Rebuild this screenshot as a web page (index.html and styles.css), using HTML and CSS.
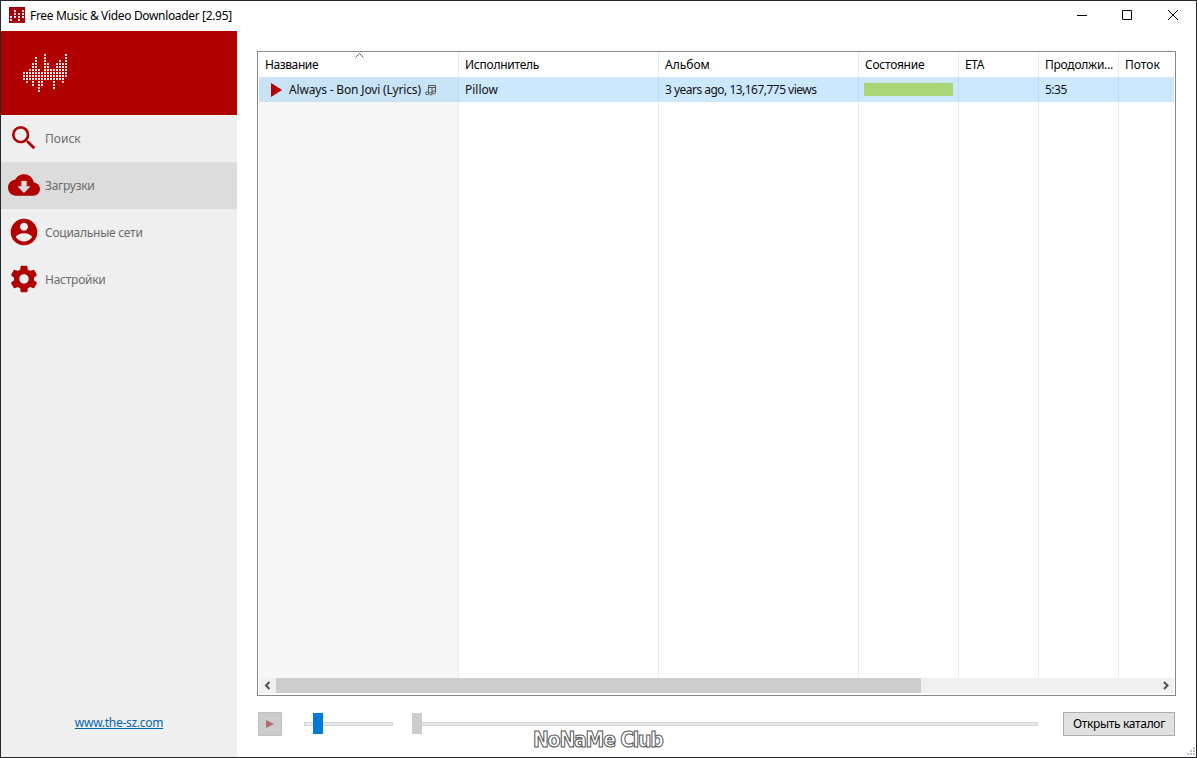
FILE: index.html
```html
<!DOCTYPE html>
<html lang="ru">
<head>
    <meta charset="UTF-8">
    <meta name="viewport" content="width=device-width, initial-scale=1.0">
    <title>Free Music &amp; Video Downloader</title>
    <link rel="stylesheet" href="styles.css">
</head>
<body>
    <div class="window">
        <header class="titlebar">
            <svg class="app-icon" width="16" height="16" viewBox="0 0 16 16">
                <rect width="16" height="16" fill="#a3000a"/>
                <g stroke="#f3dede" stroke-width="2" stroke-dasharray="2 1">
                    <path d="M2 9v5M6 3v8M10 6v8M14 3v8"/>
                </g>
            </svg>
            <span class="title">Free Music &amp; Video Downloader [2.95]</span>
            <div class="window-buttons">
                <svg width="46" height="28" viewBox="0 0 46 28"><path d="M18 14.500h10"/></svg>
                <svg width="45" height="28" viewBox="0 0 45 28"><path d="M17.500 9.500h9v9h-9z"/></svg>
                <svg width="46" height="28" viewBox="0 0 46 28"><path d="M18 9l10 10M28 9L18 19"/></svg>
            </div>
        </header>

        <div class="content">
            <aside class="sidebar">
                <div class="banner">
                    <svg width="45" height="39" viewBox="0 0 45 39">
                        <g stroke="#f7e4e4" stroke-width="2" stroke-dasharray="2 1">
                            <path d="M1 18v9M4 18v12M7 15v12M10 9v24M13 3v24M16 15v24M19 18v15M22 0v27M25 9v18M28 15v12M31 15v21M34 9v18M37 6v21M40 9v21M43 0v24"/>
                        </g>
                    </svg>
                </div>
                <nav>
                    <a class="nav-item">
                        <svg width="32" height="32" viewBox="0 0 24 24"><path d="M15.500 14h-.79l-.28-.27A6.470 6.470 0 0 0 16 9.500 6.500 6.500 0 1 0 9.500 16c1.610 0 3.090-.59 4.230-1.570l.27.28v.79l5 4.990L20.490 19l-4.990-5zm-6 0C7.010 14 5 11.990 5 9.500S7.010 5 9.500 5 14 7.010 14 9.500 11.990 14 9.500 14z"/></svg>
                        <span>Поиск</span>
                    </a>
                    <a class="nav-item active">
                        <svg width="32" height="32" viewBox="0 0 24 24"><path d="M19.350 10.040C18.670 6.590 15.640 4 12 4 9.110 4 6.600 5.640 5.350 8.040 2.340 8.360 0 10.910 0 14c0 3.310 2.690 6 6 6h13c2.760 0 5-2.240 5-5 0-2.640-2.050-4.780-4.650-4.960zM17 13l-5 5-5-5h3V9h4v4h3z"/></svg>
                        <span class="tight">Загрузки</span>
                    </a>
                    <a class="nav-item">
                        <svg width="32" height="32" viewBox="0 0 24 24"><path d="M12 2C6.480 2 2 6.480 2 12s4.480 10 10 10 10-4.480 10-10S17.520 2 12 2zm0 3c1.660 0 3 1.340 3 3s-1.340 3-3 3-3-1.340-3-3 1.340-3 3-3zm0 14.200c-2.500 0-4.710-1.280-6-3.220.03-1.990 4-3.080 6-3.080 1.990 0 5.970 1.090 6 3.080-1.290 1.940-3.500 3.220-6 3.220z"/></svg>
                        <span class="tight">Социальные сети</span>
                    </a>
                    <a class="nav-item">
                        <svg width="32" height="32" viewBox="0 0 24 24"><path d="M19.430 12.980c.04-.32.07-.64.07-.98s-.03-.66-.07-.98l2.110-1.650c.19-.15.24-.42.12-.64l-2-3.460c-.12-.22-.39-.3-.61-.22l-2.490 1c-.52-.4-1.080-.73-1.690-.98l-.38-2.650C14.460 2.180 14.250 2 14 2h-4c-.25 0-.46.18-.49.42l-.38 2.650c-.61.25-1.170.59-1.690.98l-2.490-1c-.23-.09-.49 0-.61.22l-2 3.460c-.13.22-.07.49.12.64l2.110 1.650c-.04.32-.07.65-.07.98s.03.66.07.98l-2.110 1.650c-.19.15-.24.42-.12.64l2 3.460c.12.22.39.3.61.22l2.490-1c.52.4 1.080.73 1.690.98l.38 2.650c.03.24.24.42.49.42h4c.25 0 .46-.18.49-.42l.38-2.650c.61-.25 1.170-.59 1.690-.98l2.490 1c.23.09.49 0 .61-.22l2-3.460c.12-.22.07-.49-.12-.64l-2.110-1.650zM12 15.500c-1.930 0-3.500-1.570-3.500-3.500s1.570-3.500 3.500-3.500 3.500 1.570 3.500 3.500-1.570 3.500-3.500 3.500z"/></svg>
                        <span class="tight">Настройки</span>
                    </a>
                </nav>
                <a class="site-link">www.the-sz.com</a>
            </aside>

            <main class="main">
                <div class="table">
                    <div class="row head">
                        <div class="cell sorted">
                            <span class="tighter">Название</span>
                            <svg class="sort-arrow" width="9" height="5" viewBox="0 0 9 5"><path d="M.5 4.500l4-4 4 4"/></svg>
                        </div>
                        <div class="cell"><span class="tight">Исполнитель</span></div>
                        <div class="cell"><span>Альбом</span></div>
                        <div class="cell"><span class="tight">Состояние</span></div>
                        <div class="cell"><span class="tighter">ETA</span></div>
                        <div class="cell"><span class="tight">Продолжи...</span></div>
                        <div class="cell"><span>Поток</span></div>
                    </div>
                    <div class="row selected">
                        <div class="cell track-name">
                            <svg width="11" height="14" viewBox="0 0 11 14"><path d="M0 0l11 7-11 7z" fill="#b00000"/></svg>
                            <span class="track-title">Always - Bon Jovi (Lyrics)</span>
                            <svg class="note" width="11" height="12" viewBox="0 0 11 12">
                                <path d="M3.500 9V1.500h7V8M3.500 3.500h7M7 3.500v6"/>
                                <circle cx="2.200" cy="9.200" r="1.500"/>
                                <circle cx="5.800" cy="9.700" r="1.300"/>
                                <circle cx="9" cy="8.300" r="1.500"/>
                            </svg>
                        </div>
                        <div class="cell"><span>Pillow</span></div>
                        <div class="cell"><span class="views">3 years ago, 13,167,775 views</span></div>
                        <div class="cell state"><div class="progress"></div></div>
                        <div class="cell"></div>
                        <div class="cell"><span class="views">5:35</span></div>
                        <div class="cell"></div>
                    </div>
                    <div class="row empty">
                        <div class="cell sorted"></div>
                        <div class="cell"></div>
                        <div class="cell"></div>
                        <div class="cell"></div>
                        <div class="cell"></div>
                        <div class="cell"></div>
                        <div class="cell"></div>
                    </div>
                    <div class="scrollbar">
                        <svg width="17" height="15" viewBox="0 0 17 15"><path d="M10.500 4L7 7.500l3.500 3.500"/></svg>
                        <div class="thumb"></div>
                        <svg width="17" height="15" viewBox="0 0 17 15"><path d="M7 4l3.500 3.500L7 11"/></svg>
                    </div>
                </div>

                <div class="player">
                    <button class="play">
                        <svg width="8" height="8" viewBox="0 0 8 8"><path d="M0 0l8 4-8 4z" fill="#b66a70"/></svg>
                    </button>
                    <div class="slider volume"><div class="knob"></div></div>
                    <div class="slider seek"><div class="knob"></div></div>
                    <button class="open-folder"><span>Открыть каталог</span></button>
                </div>
            </main>
        </div>

        <div class="watermark">NoNaMe Club</div>
        <svg class="grip" width="8" height="8" viewBox="0 0 8 8">
            <path d="M6 0h2v2H6zM3 3h2v2H3zM6 3h2v2H6zM0 6h2v2H0zM3 6h2v2H3zM6 6h2v2H6z" fill="#bfbfbf"/>
        </svg>
    </div>
</body>
</html>
```

FILE: styles.css
```css
:root {
    --red: #b00000;
    --line: #ececec;
    --columns: 200px 200px 200px 100px 80px 80px 1fr;
}

* {
    margin: 0;
    padding: 0;
    box-sizing: border-box;
}

body {
    font-family: "Noto Sans", "Open Sans", sans-serif;
    font-size: 12px;
    color: #111;
    background-color: #fff;
}

span {
    white-space: nowrap;
}

.tight {
    letter-spacing: -0.25px;
}

.tighter {
    letter-spacing: -0.4px;
}

.window {
    position: relative;
    display: flex;
    flex-direction: column;
    width: 1197px;
    height: 758px;
    border: 1px solid #25272b;
    background-color: #fff;
    overflow: hidden;
}

.titlebar {
    display: flex;
    align-items: center;
    height: 30px;
    padding-left: 8px;
    color: #000;
}

.app-icon {
    margin-right: 5px;
    margin-top: -2px;
}

.title {
    margin-top: -1px;
    letter-spacing: -0.34px;
}

.window-buttons {
    display: flex;
    margin-left: auto;
    margin-top: -2px;
    fill: none;
    stroke: #000;
    stroke-width: 1;
}

.content {
    display: flex;
    flex: 1;
}

.sidebar {
    display: flex;
    flex-direction: column;
    width: 236px;
    background-color: #efefef;
}

.banner {
    height: 84px;
    padding: 23px 22px;
    background-color: var(--red);
}

.nav-item {
    display: flex;
    align-items: center;
    gap: 5px;
    height: 47px;
    padding-left: 7px;
    color: #6b6b6b;
}

.nav-item svg {
    margin-top: -1px;
    fill: var(--red);
}

.nav-item.active {
    background-color: #dcdcdc;
}

.site-link {
    align-self: center;
    margin-top: auto;
    margin-bottom: 26px;
    letter-spacing: -0.28px;
    color: #0066b4;
    text-decoration: underline;
}

.main {
    flex: 1;
    padding: 20px 20px 0;
}

.table {
    display: flex;
    flex-direction: column;
    width: 919px;
    height: 645px;
    padding: 0 1px 2px;
    border: 1px solid #828790;
}

.row {
    display: grid;
    grid-template-columns: var(--columns);
    height: 25px;
}

.cell {
    display: flex;
    align-items: center;
    padding-left: 6px;
    border-right: 1px solid var(--line);
}

.cell:last-child {
    border-right: none;
}

.head .cell {
    position: relative;
    color: #000;
}

.sort-arrow {
    position: absolute;
    top: 1px;
    left: 96px;
    fill: none;
    stroke: #666;
}

.selected {
    background-color: #cce8ff;
}

.selected .cell {
    border-color: #bfdcf1;
}

.track-name {
    padding-left: 12px;
    background-color: #c8e2f6;
}

.track-title {
    margin-left: 7px;
    letter-spacing: -0.17px;
}

.note {
    margin-left: 4px;
    fill: none;
    stroke: #555;
}

.views {
    letter-spacing: -0.52px;
}

.state {
    padding-left: 5px;
}

.progress {
    width: 89px;
    height: 13px;
    background-color: #a9d577;
}

.empty {
    flex: 1;
}

.empty .sorted {
    background-color: #f7f7f7;
}

.scrollbar {
    display: flex;
    height: 15px;
    background-color: #f0f0f0;
}

.scrollbar svg {
    fill: none;
    stroke: #505050;
    stroke-width: 2;
}

.scrollbar .thumb {
    width: 645px;
    margin-right: auto;
    background-color: #cdcdcd;
}

.player {
    display: flex;
    align-items: center;
    height: 25px;
    margin-top: 15px;
}

button {
    display: flex;
    align-items: center;
    justify-content: center;
    font: inherit;
    color: #000;
    border: 1px solid #adadad;
    background-color: #e1e1e1;
}

.play {
    width: 24px;
    height: 24px;
    margin-left: 1px;
    border-color: #bfbfbf;
    background-color: #ccc;
}

.slider {
    display: flex;
    align-items: center;
    height: 4px;
    border: 1px solid #d6d6d6;
    background-color: #e7eaea;
}

.knob {
    flex: none;
    width: 10px;
    height: 21px;
    background-color: #ccc;
}

.volume {
    width: 89px;
    margin-left: 22px;
}

.volume .knob {
    margin-left: 8px;
    background-color: #007ad9;
}

.seek {
    width: 626px;
    margin-left: 19px;
}

.seek .knob {
    margin-left: -1px;
}

.open-folder {
    width: 112px;
    height: 24px;
    margin-left: 25px;
    letter-spacing: -0.33px;
}

.watermark {
    position: absolute;
    left: 532px;
    top: 727px;
    font-family: "DejaVu Sans Condensed", "DejaVu Sans", sans-serif;
    font-weight: bold;
    font-stretch: condensed;
    font-size: 21px;
    line-height: 24px;
    letter-spacing: -1.2px;
    white-space: nowrap;
    color: #fff;
    -webkit-text-stroke: 1px #555;
}

.grip {
    position: absolute;
    right: 1px;
    bottom: 2px;
}
```
